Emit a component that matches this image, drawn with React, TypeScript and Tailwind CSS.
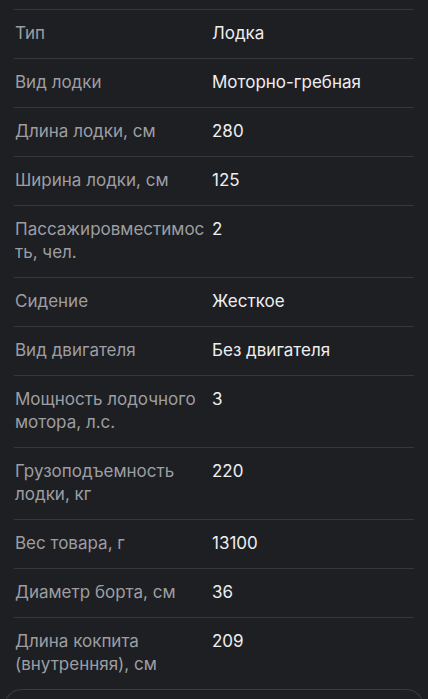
import React from 'react';

const specs: [string, string][] = [
    ['Тип', 'Лодка'],
    ['Вид лодки', 'Моторно-гребная'],
    ['Длина лодки, см', '280'],
    ['Ширина лодки, см', '125'],
    ['Пассажировместимость, чел.', '2'],
    ['Сидение', 'Жесткое'],
    ['Вид двигателя', 'Без двигателя'],
    ['Мощность лодочного мотора, л.с.', '3'],
    ['Грузоподъемность лодки, кг', '220'],
    ['Вес товара, г', '13100'],
    ['Диаметр борта, см', '36'],
    ['Длина кокпита (внутренняя), см', '209'],
];

export default function App() {
    return (
        <div className="min-h-screen bg-[#1e1f23] pt-[9px] font-['Inter',sans-serif] text-[17px] leading-[23px]">
            <div className="px-[14px]">
                {specs.map(([label, value]) => (
                    <div key={label} className="grid grid-cols-[198px_1fr] border-t border-[#37383c] pt-[12px] pb-[13px]">
                        <div className="pl-px pr-1 text-[#9d9ea2] break-words">{label}</div>
                        <div className="text-[#eeeeef]">{value}</div>
                    </div>
                ))}
            </div>
            {/* next card peeking at the bottom */}
            <div className="mx-[4px] h-[30px] rounded-t-[18px] border border-b-0 border-[#3a3b3f] bg-[#1e1f23]" />
        </div>
    );
}
